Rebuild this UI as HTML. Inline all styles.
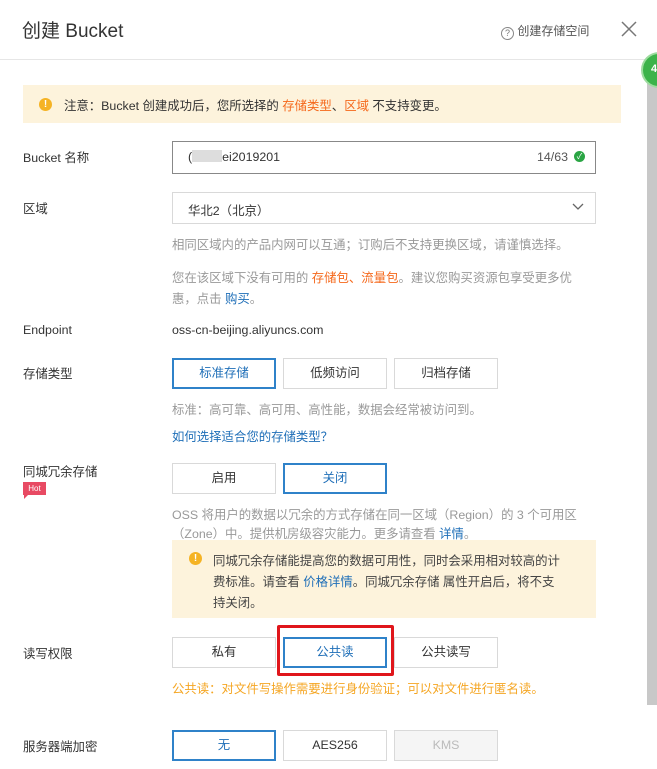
<!DOCTYPE html>
<html><head><meta charset="utf-8"><style>
*{box-sizing:border-box;margin:0;padding:0}
body{width:657px;height:769px;overflow:hidden;background:#fff;font-family:"Liberation Sans","Noto Sans CJK SC",sans-serif;font-size:12.4px;color:#333;position:relative}
.a{position:absolute;white-space:nowrap}
.lbl{position:absolute;left:23px;font-size:12.4px;color:#333}
.btn{position:absolute;height:31px;border:1px solid #d9d9d9;text-align:center;line-height:29px;font-size:12.4px;color:#333;background:#fff}
.sel{border:2px solid #2f82c9;color:#1f6fb8;line-height:27px}
.gray{color:#999}
.o{color:#f5681b}
.b{color:#1f6fb8}
</style></head><body>
<div class="a" style="left:22px;top:16px;font-size:19px;color:#333">创建 Bucket</div>
<div class="a" style="left:501px;top:22px;font-size:12px;color:#555"><span style="display:inline-block;width:13px;height:13px;border:1px solid #888;border-radius:50%;font-size:9px;line-height:11px;text-align:center;color:#777;vertical-align:-1px">?</span> 创建存储空间</div>
<svg class="a" style="left:621px;top:21px" width="16" height="16"><path d="M1 1L15 15M15 1L1 15" stroke="#777" stroke-width="1.5"/></svg>
<div class="a" style="left:0;top:59px;width:645px;height:1px;background:#e6e6e6"></div>
<div class="a" style="left:647px;top:70px;width:10px;height:635px;background:#c8c8c8"></div>
<div class="a" style="left:641px;top:52px;width:36px;height:36px;border-radius:50%;background:#3cb34a;border:2px solid #9ddc9f"></div>
<div class="a" style="left:651px;top:63px;color:#fff;font-weight:bold;font-size:11px">4</div>

<div class="a" style="left:23px;top:85px;width:598px;height:38px;background:#fdf3dc"></div>
<div class="a" style="left:39px;top:98px;width:13px;height:13px;border-radius:50%;background:#f5b324;color:#fff;font-size:10px;line-height:13px;text-align:center;font-weight:bold">!</div>
<div class="a" style="left:64px;top:96px">注意：Bucket 创建成功后，您所选择的 <span class="o">存储类型</span>、<span class="o">区域</span> 不支持变更。</div>

<div class="lbl" style="top:148px">Bucket 名称</div>
<div class="a" style="left:172px;top:141px;width:424px;height:33px;border:1px solid #888"></div>
<div class="a" style="left:188px;top:150px">(<span style="display:inline-block;width:30px;height:12px;background:#ddd;vertical-align:-1px"></span>ei2019201</div>
<div class="a" style="left:537px;top:150px;color:#555">14/63</div>
<div class="a" style="left:574px;top:151px;width:11px;height:11px;border-radius:50%;background:#2aa544;color:#fff;font-size:8px;line-height:11px;text-align:center">✓</div>

<div class="lbl" style="top:199px">区域</div>
<div class="a" style="left:172px;top:192px;width:424px;height:32px;border:1px solid #d9d9d9"></div>
<div class="a" style="left:188px;top:201px">华北2（北京）</div>
<svg class="a" style="left:572px;top:203px" width="12" height="8"><path d="M1 1L6 6L11 1" stroke="#666" fill="none" stroke-width="1.3"/></svg>
<div class="a gray" style="left:172px;top:235px">相同区域内的产品内网可以互通；订购后不支持更换区域，请谨慎选择。</div>
<div class="a gray" style="left:172px;top:268px">您在该区域下没有可用的 <span class="o">存储包、流量包</span>。建议您购买资源包享受更多优</div>
<div class="a gray" style="left:172px;top:289px">惠，点击 <span class="b">购买</span>。</div>

<div class="lbl" style="top:323px">Endpoint</div>
<div class="a" style="left:172px;top:323px">oss-cn-beijing.aliyuncs.com</div>

<div class="lbl" style="top:364px">存储类型</div>
<div class="btn sel" style="left:172px;top:358px;width:104px">标准存储</div>
<div class="btn" style="left:283px;top:358px;width:104px">低频访问</div>
<div class="btn" style="left:394px;top:358px;width:104px">归档存储</div>
<div class="a gray" style="left:172px;top:400px">标准：高可靠、高可用、高性能，数据会经常被访问到。</div>
<div class="a b" style="left:172px;top:427px">如何选择适合您的存储类型？</div>

<div class="lbl" style="top:462px">同城冗余存储</div>
<div class="a" style="left:23px;top:482px;width:23px;height:13px;background:#e84a63;color:#fff;font-size:8px;line-height:13px;text-align:center">Hot</div>
<div class="a" style="left:24px;top:495px;width:0;height:0;border-left:4px solid #e84a63;border-bottom:4px solid transparent"></div>
<div class="btn" style="left:172px;top:463px;width:104px">启用</div>
<div class="btn sel" style="left:283px;top:463px;width:104px">关闭</div>
<div class="a gray" style="left:172px;top:505px">OSS 将用户的数据以冗余的方式存储在同一区域（Region）的 3 个可用区</div>
<div class="a gray" style="left:172px;top:524px">（Zone）中。提供机房级容灾能力。更多请查看 <span class="b">详情</span>。</div>
<div class="a" style="left:172px;top:540px;width:424px;height:78px;background:#fdf3dc"></div>
<div class="a" style="left:189px;top:552px;width:13px;height:13px;border-radius:50%;background:#f5b324;color:#fff;font-size:10px;line-height:13px;text-align:center;font-weight:bold">!</div>
<div class="a" style="left:213px;top:551px;color:#444">同城冗余存储能提高您的数据可用性，同时会采用相对较高的计</div>
<div class="a" style="left:213px;top:572px;color:#444">费标准。请查看 <span class="b">价格详情</span>。同城冗余存储 属性开启后，将不支</div>
<div class="a" style="left:213px;top:593px;color:#444">持关闭。</div>

<div class="lbl" style="top:644px">读写权限</div>
<div class="btn" style="left:172px;top:637px;width:104px">私有</div>
<div class="btn sel" style="left:283px;top:637px;width:104px">公共读</div>
<div class="btn" style="left:394px;top:637px;width:104px">公共读写</div>
<div class="a" style="left:277px;top:625px;width:117px;height:51px;border:3px solid #e0161b;border-radius:2px"></div>
<div class="a" style="left:172px;top:679px;color:#f5a623">公共读：对文件写操作需要进行身份验证；可以对文件进行匿名读。</div>

<div class="lbl" style="top:737px">服务器端加密</div>
<div class="btn sel" style="left:172px;top:730px;width:104px">无</div>
<div class="btn" style="left:283px;top:730px;width:104px">AES256</div>
<div class="btn" style="left:394px;top:730px;width:104px;background:#f5f5f5;color:#bbb">KMS</div>
</body></html>
